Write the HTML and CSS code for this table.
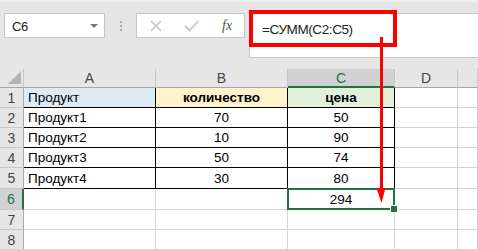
FILE: index.html
```html
<!DOCTYPE html>
<html lang="ru">
<head>
  <meta charset="UTF-8" />
  <title>СУММ</title>
  <link rel="stylesheet" href="styles.css">
</head>
<body>
  <div class="formula-bar">
    <div class="name-box">
      <span>C6</span>
      <span class="drop"></span>
    </div>
    <div class="dots"><i></i><i></i><i></i></div>
    <div class="fx-buttons">
      <svg width="12" height="12" viewBox="0 0 12 12"><path d="M1 1 L11 11 M11 1 L1 11" stroke="#c6c6c6" stroke-width="1.6" fill="none"/></svg>
      <svg width="15" height="12" viewBox="0 0 15 12"><path d="M1 6 L5.5 10.5 L14 1.5" stroke="#c6c6c6" stroke-width="1.8" fill="none"/></svg>
      <span class="fx">fx</span>
    </div>
    <div class="formula-input">=СУММ(C2:C5)</div>
  </div>

  <div class="sheet">
    <!-- column headers -->
    <div class="hd corner"><span class="tri"></span></div>
    <div class="hd">A</div>
    <div class="hd">B</div>
    <div class="hd sel-col">C</div>
    <div class="hd">D</div>
    <div class="hd"></div>

    <div class="rh">1</div>
    <div class="cell t left r1a">Продукт</div>
    <div class="cell t mid bold r1b">количество</div>
    <div class="cell t mid bold r1c">цена</div>
    <div class="cell"></div>
    <div class="cell"></div>

    <div class="rh">2</div>
    <div class="cell t left">Продукт1</div>
    <div class="cell t mid">70</div>
    <div class="cell t mid">50</div>
    <div class="cell"></div>
    <div class="cell"></div>

    <div class="rh">3</div>
    <div class="cell t left">Продукт2</div>
    <div class="cell t mid">10</div>
    <div class="cell t mid">90</div>
    <div class="cell"></div>
    <div class="cell"></div>

    <div class="rh">4</div>
    <div class="cell t left">Продукт3</div>
    <div class="cell t mid">50</div>
    <div class="cell t mid">74</div>
    <div class="cell"></div>
    <div class="cell"></div>

    <div class="rh">5</div>
    <div class="cell t left">Продукт4</div>
    <div class="cell t mid">30</div>
    <div class="cell t mid">80</div>
    <div class="cell"></div>
    <div class="cell"></div>

    <div class="rh sel-row">6</div>
    <div class="cell"></div>
    <div class="cell"></div>
    <div class="cell mid active">294</div>
    <div class="cell"></div>
    <div class="cell"></div>

    <div class="rh">7</div>
    <div class="cell"></div>
    <div class="cell"></div>
    <div class="cell"></div>
    <div class="cell"></div>
    <div class="cell"></div>

    <div class="rh">8</div>
    <div class="cell"></div>
    <div class="cell"></div>
    <div class="cell"></div>
    <div class="cell"></div>
    <div class="cell"></div>
  </div>

  <!-- red callout: formula frame and arrow down to the result -->
  <svg class="callout" width="478" height="249" viewBox="0 0 478 249">
    <rect x="251" y="12" width="144" height="33" fill="none" stroke="#ff0000" stroke-width="4"/>
    <rect x="380" y="37" width="3" height="153" fill="#ff0000"/>
    <polygon points="376.5,188 385.5,188 381.5,203" fill="#ff0000"/>
  </svg>
</body>
</html>
```

FILE: styles.css
```css
* {
  box-sizing: border-box;
  margin: 0;
  padding: 0;
}

body {
  width: 478px;
  height: 249px;
  overflow: hidden;
  background: #e6e6e6;
  font-family: 'Liberation Sans', Arial, sans-serif;
  position: relative;
}

/* top strip with name box and formula input */
.formula-bar {
  height: 69px;
  display: flex;
  align-items: flex-start;
  padding: 13px 0 0 4px;
  border-top: 2px solid #f0f0f0;
}

.name-box {
  width: 101px;
  height: 25px;
  margin-top: -2px;
  background: #fff;
  border: 1px solid #c6c6c6;
  display: flex;
  align-items: center;
  justify-content: space-between;
  padding: 1px 6px 0 7px;
  font-size: 13px;
  letter-spacing: -0.4px;
  color: #222;
}

.name-box .drop {
  width: 0;
  height: 0;
  border-left: 4px solid transparent;
  border-right: 4px solid transparent;
  border-top: 4px solid #777;
}

.dots {
  width: 31px;
  height: 25px;
  margin-top: -2px;
  display: flex;
  flex-direction: column;
  align-items: center;
  justify-content: center;
  gap: 2px;
}

.dots i {
  width: 2px;
  height: 2px;
  background: #aaa;
}

.fx-buttons {
  width: 109px;
  height: 25px;
  margin-top: -2px;
  background: #fff;
  border: 1px solid #c6c6c6;
  display: flex;
  align-items: center;
  padding-left: 13px;
  gap: 22px;
}

.fx {
  font-family: 'Liberation Serif', serif;
  font-style: italic;
  font-size: 14px;
  color: #555;
  margin-left: 1px;
}

.formula-input {
  flex: 1;
  height: 45px;
  margin-top: -2px;
  margin-left: 4px;
  background: #fff;
  border: 1px solid #c6c6c6;
  border-right: none;
  padding: 8px 0 0 12px;
  font-size: 13.5px;
  letter-spacing: -0.4px;
  color: #222;
}

/* worksheet grid */
.sheet {
  display: grid;
  grid-template-columns: 24px 132px 132px 107px 63px 20px;
  grid-template-rows: 19px 20px 20px 20px 20px 21px 21px 20px 20px;
  background: #fff;
  font-size: 13.5px;
}

.hd,
.rh {
  background: #e6e6e6;
  color: #444;
  display: flex;
  align-items: center;
  justify-content: center;
  font-size: 14px;
}

.hd {
  border-right: 1px solid #c8c8c8;
  border-bottom: 1px solid #a6a6a6;
}

.rh {
  border-right: 1px solid #a6a6a6;
  border-bottom: 1px solid #c8c8c8;
}

.corner {
  position: relative;
}

.corner .tri {
  position: absolute;
  right: 2px;
  bottom: 3px;
  width: 0;
  height: 0;
  border-left: 13px solid transparent;
  border-bottom: 13px solid #b4b4b4;
}

.sel-col {
  background: #d2d2d2;
  color: #217346;
  border-bottom: 2px solid #217346;
}

.sel-row {
  background: #d2d2d2;
  color: #217346;
  border-right: 2px solid #217346;
}

.cell {
  border-right: 1px solid #d4d4d4;
  border-bottom: 1px solid #d4d4d4;
  display: flex;
  align-items: center;
  color: #000;
  white-space: nowrap;
}

.cell.t {
  border-right-color: #000;
  border-bottom-color: #000;
}

.left {
  padding-left: 4px;
}

.mid {
  justify-content: center;
}

.bold {
  font-weight: bold;
}

.r1a { background: #ddebf7; }
.r1b { background: #fff2cc; }
.r1c { background: #e2efda; }

/* active cell frame with fill handle */
.active {
  position: relative;
}

.active::before {
  content: '';
  position: absolute;
  left: -1px;
  top: -1px;
  right: -1px;
  bottom: -1px;
  border: 2px solid #217346;
}

.active::after {
  content: '';
  position: absolute;
  right: -4px;
  bottom: -4px;
  width: 6px;
  height: 6px;
  background: #217346;
  border: 1px solid #fff;
}

.callout {
  position: absolute;
  left: 0;
  top: 0;
  pointer-events: none;
}
```
